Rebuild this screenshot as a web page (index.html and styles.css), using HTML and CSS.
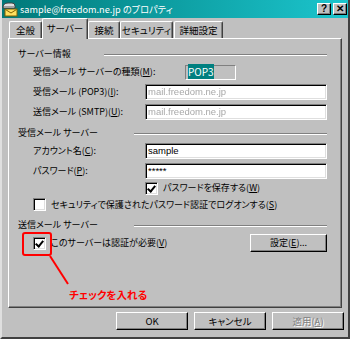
FILE: index.html
```html
<!DOCTYPE html>
<html>
<head>
    <meta charset="UTF-8">
    <title>sample@freedom.ne.jp のプロパティ</title>
    <link rel="stylesheet" href="styles.css">
</head>
<body>
    <div class="window">
        <div class="titlebar">
            <svg class="appicon" width="16" height="16" viewBox="0 0 16 16">
                <rect x="3" y="8" width="12" height="7" fill="#ffe060" stroke="#806000"/>
                <path d="M3.5 8.5 L9 12 L14.5 8.5" fill="none" stroke="#806000"/>
                <path d="M1 7 Q1 2 6 2 L10 2 Q13 2 13 5 L13 7 Z" fill="#e0e0e0" stroke="#404040"/>
                <rect x="2" y="5" width="10" height="2" fill="#a0a0a0"/>
            </svg>
            <span class="title">sample@freedom.ne.jp のプロパティ</span>
            <div class="tbtns">
                <span class="tbtn">?</span>
                <span class="tbtn">✕</span>
            </div>
        </div>

        <div class="tabs">
            <span class="tab w1">全般</span>
            <span class="tab active">サーバー</span>
            <span class="tab w3">接続</span>
            <span class="tab w4">セキュリティ</span>
            <span class="tab w5">詳細設定</span>
        </div>

        <div class="panel">
            <div class="group">
                <span>サーバー情報</span><span class="rule"></span>
            </div>
            <div class="row r20">
                <span class="label wide">受信メール サーバーの種類(<u>M</u>):</span>
                <span class="typebox"><span class="sel">POP3</span></span>
            </div>
            <div class="row r20">
                <span class="label">受信メール (POP3)(<u>I</u>):</span>
                <span class="field"><span class="blur">mail.freedom.ne.jp</span></span>
            </div>
            <div class="row r20">
                <span class="label">送信メール (SMTP)(<u>U</u>):</span>
                <span class="field"><span class="blur">mail.freedom.ne.jp</span></span>
            </div>

            <div class="group g2">
                <span>受信メール サーバー</span><span class="rule"></span>
            </div>
            <div class="row r20">
                <span class="label">アカウント名(<u>C</u>):</span>
                <span class="field">sample</span>
            </div>
            <div class="row r20">
                <span class="label">パスワード(<u>P</u>):</span>
                <span class="field">*****</span>
            </div>
            <div class="row r14 indent">
                <span class="check on"></span>
                <span>パスワードを保存する(<u>W</u>)</span>
            </div>
            <div class="row r19">
                <span class="check"></span>
                <span>セキュリティで保護されたパスワード認証でログオンする(<u>S</u>)</span>
            </div>

            <div class="group g3">
                <span>送信メール サーバー</span><span class="rule"></span>
            </div>
            <div class="row r20">
                <span class="check on"></span>
                <span>このサーバーは認証が必要(<u>V</u>)</span>
                <span class="btn setbtn">設定(<u>E</u>)...</span>
            </div>

            <span class="mark"></span>
            <svg class="pointer" width="30" height="40" viewBox="0 0 30 40">
                <line x1="3" y1="2" x2="21" y2="30" stroke="#ff0000" stroke-width="2"/>
            </svg>
            <span class="note">チェックを入れる</span>
        </div>

        <div class="buttons">
            <span class="btn">OK</span>
            <span class="btn">キャンセル</span>
            <span class="btn disabled">適用(<u>A</u>)</span>
        </div>
    </div>
</body>
</html>
```

FILE: styles.css
```css
body {
    margin: 0;
    font-family: "Noto Sans CJK JP", "Liberation Sans", sans-serif;
    font-size: 9px;
    font-feature-settings: "palt";
    line-height: 12px;
    white-space: nowrap;
    color: #000;
    background: #c0c0c0;
}
.window {
    width: 350px;
    height: 339px;
    box-sizing: border-box;
    background: #c0c0c0;
    border-left: 2px solid #dfdfdf;
    border-right: 2px solid #404040;
    border-bottom: 2px solid #404040;
    overflow: hidden;
}
.titlebar {
    height: 18px;
    margin-left: -2px;
    margin-right: -2px;
    display: flex;
    align-items: center;
    padding-left: 2px;
    background: linear-gradient(to right, #007878, #1cc6ce);
    color: white;
}
.appicon { flex: none; }
.title {
    margin-left: 2px;
    font-size: 9.2px;
    line-height: 18px;
}
.tbtns {
    margin-left: auto;
    margin-right: 3px;
    display: flex;
    gap: 2px;
}
.tbtn {
    width: 14px;
    height: 12px;
    box-sizing: border-box;
    background: #c0c0c0;
    color: #000;
    font-family: "Liberation Sans", sans-serif;
    font-weight: bold;
    font-size: 10px;
    line-height: 10px;
    text-align: center;
    border: 1px solid;
    border-color: #fff #000 #000 #fff;
    box-shadow: inset -1px -1px #808080;
}
.tabs {
    height: 20px;
    padding-left: 7px;
    display: flex;
    align-items: flex-end;
    position: relative;
    z-index: 1;
}
.tab {
    height: 17px;
    box-sizing: border-box;
    text-align: center;
    font-size: 9.5px;
    line-height: 16px;
    border: 1px solid;
    border-color: #fff #404040 transparent #fff;
    border-bottom: none;
    border-radius: 2px 2px 0 0;
    box-shadow: inset -1px 0 #808080;
}
.w1 { width: 33px; }
.w3 { width: 32px; }
.w4 { width: 53px; }
.w5 { width: 49px; margin-left: 1px; }
.tab.active {
    width: 46px;
    height: 21px;
    margin-bottom: -1px;
    background: #c0c0c0;
    line-height: 18px;
}
.panel {
    position: relative;
    height: 270px;
    margin: 0 6px;
    box-sizing: border-box;
    border: 1px solid;
    border-color: #fff #404040 #404040 #fff;
    box-shadow: inset -1px -1px #808080;
    padding: 7px 14px 0 9px;
}
.group {
    height: 16px;
    display: flex;
    align-items: center;
}
.g2 { margin-top: 3px; }
.g3 { margin-top: 3px; }
.rule {
    flex: 1;
    margin-left: 33px;
    margin-top: 2px;
    border-top: 1px solid #808080;
    border-bottom: 1px solid #fff;
}
.g2 .rule,
.g3 .rule { margin-left: 36px; }
.row {
    display: flex;
    align-items: center;
    padding-left: 15px;
}
.r20 { height: 20px; }
.r19 { height: 19px; }
.r14 { height: 14px; }
.indent { padding-left: 127px; }
.label {
    width: 112px;
    flex: none;
}
.label.wide { width: 152px; }
.typebox {
    width: 51px;
    height: 15px;
    box-sizing: border-box;
    border: 1px solid;
    border-color: #808080 #fff #fff #808080;
    padding-left: 2px;
    line-height: 12px;
    font-size: 10px;
}
.sel {
    background: #008080;
    color: #fff;
}
.field {
    flex: 1;
    height: 16px;
    box-sizing: border-box;
    background: #fff;
    border: 1px solid;
    border-color: #808080 #fff #fff #808080;
    box-shadow: inset 1px 1px #000, inset -1px -1px #dfdfdf;
    padding-left: 2px;
    line-height: 14px;
    font-family: "Liberation Sans", sans-serif;
    font-size: 9.5px;
}
.blur {
    color: #a8a8a8;
    filter: blur(0.7px);
}
.check {
    width: 13px;
    height: 13px;
    flex: none;
    box-sizing: border-box;
    margin-right: 5px;
    background: #fff;
    border: 1px solid;
    border-color: #808080 #fff #fff #808080;
    box-shadow: inset 1px 1px #000, inset -1px -1px #dfdfdf;
    position: relative;
}
.check.on::after {
    content: "";
    position: absolute;
    left: 3px;
    top: 1px;
    width: 3px;
    height: 6px;
    border: solid #000;
    border-width: 0 2px 2px 0;
    transform: rotate(40deg);
}
.btn {
    height: 18px;
    box-sizing: border-box;
    display: inline-flex;
    align-items: center;
    justify-content: center;
    background: #c0c0c0;
    border: 1px solid;
    border-color: #fff #000 #000 #fff;
    box-shadow: inset -1px -1px #808080;
}
.setbtn {
    width: 77px;
    margin-left: auto;
}
.btn.disabled {
    color: #808080;
    text-shadow: 1px 1px #fff;
}
.buttons {
    display: flex;
    justify-content: flex-end;
    gap: 6px;
    margin-top: 4px;
    padding-right: 4px;
    font-size: 9.5px;
}
.buttons .btn { width: 72px; }
.mark {
    position: absolute;
    left: 13px;
    top: 193px;
    width: 26px;
    height: 20px;
    border: 2px solid #ff0000;
    border-radius: 3px;
}
.pointer {
    position: absolute;
    left: 38px;
    top: 215px;
}
.note {
    position: absolute;
    left: 60px;
    top: 250px;
    color: #ff0000;
    font-weight: bold;
    font-size: 10.5px;
}
```
